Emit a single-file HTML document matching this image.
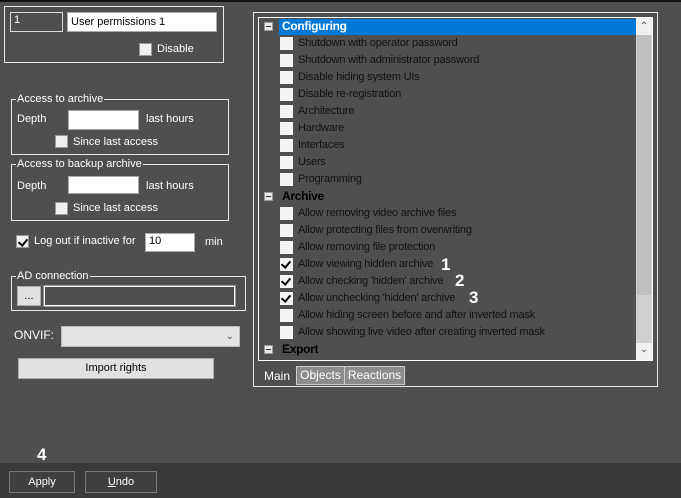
<!DOCTYPE html>
<html><head><style>
*{margin:0;padding:0;box-sizing:border-box}
body{width:681px;height:498px;background:#4f4f4f;font-family:"Liberation Sans",sans-serif;font-size:11px;color:#fff;position:relative;overflow:hidden}
.a{position:absolute}
.box{position:absolute;border:1px solid #e8e8e8}
.inp{position:absolute;background:#fff;border:1px solid #aaa;color:#000;padding-left:3px;line-height:15px}
.cb{position:absolute;width:13px;height:13px;background:#f0f0f0;border:1px solid #999}
.lg{position:absolute;background:#4f4f4f;padding:0 1px;line-height:12px}
.btn{position:absolute;background:#e1e1e1;border:1px solid #adadad;color:#000;text-align:center}
.row{position:absolute;left:0;height:17px;line-height:17px;color:#111;font-size:11px;letter-spacing:-0.2px}
.row .c{position:absolute;left:21px;top:2px;width:13px;height:13px;background:#f4f4f4}
.row .t{position:absolute;left:39px;white-space:nowrap}
.hd .t{left:23px;font-weight:bold;font-size:12px;color:#000;letter-spacing:-0.3px}
.pm{position:absolute;left:5px;top:4px;width:9px;height:9px;border:1px solid #999;background:#e8e8e8}
.pm:after{content:"";position:absolute;left:1px;top:3px;width:5px;height:1px;background:#333}
.num{position:absolute;color:#fff;font-weight:bold;font-size:17px}
.chk:after{content:"";position:absolute;left:3px;top:1px;width:4px;height:7px;border:solid #000;border-width:0 2px 2px 0;transform:rotate(40deg)}
</style></head><body>
<div class="a" style="left:0;top:0;width:681px;height:2px;background:#111"></div>
<div class="box" style="left:4px;top:6px;width:220px;height:57px"></div>
<div class="inp" style="left:10px;top:12px;width:53px;height:20px;background:#4f4f4f;border-color:#ddd;color:#fff">1</div>
<div class="inp" style="left:67px;top:12px;width:150px;height:20px;line-height:18px">User permissions 1</div>
<div class="cb" style="left:139px;top:43px"></div>
<div class="a" style="left:157px;top:43px">Disable</div>

<div class="box" style="left:11px;top:99px;width:218px;height:56px"></div>
<div class="lg" style="left:16px;top:93px">Access to archive</div>
<div class="a" style="left:17px;top:113px">Depth</div>
<div class="inp" style="left:68px;top:110px;width:71px;height:20px"></div>
<div class="a" style="left:146px;top:113px">last hours</div>
<div class="cb" style="left:55px;top:135px"></div>
<div class="a" style="left:73px;top:136px">Since last access</div>

<div class="box" style="left:11px;top:164px;width:218px;height:57px"></div>
<div class="lg" style="left:16px;top:158px">Access to backup archive</div>
<div class="a" style="left:17px;top:180px">Depth</div>
<div class="inp" style="left:68px;top:176px;width:71px;height:18px"></div>
<div class="a" style="left:146px;top:180px">last hours</div>
<div class="cb" style="left:55px;top:202px"></div>
<div class="a" style="left:73px;top:202px">Since last access</div>

<div class="cb chk" style="left:16px;top:235px"></div>
<div class="a" style="left:34px;top:235px">Log out if inactive for</div>
<div class="inp" style="left:145px;top:233px;width:50px;height:19px">10</div>
<div class="a" style="left:205px;top:236px">min</div>

<div class="box" style="left:11px;top:276px;width:235px;height:35px"></div>
<div class="lg" style="left:16px;top:270px">AD connection</div>
<div class="btn" style="left:17px;top:286px;width:24px;height:20px;line-height:18px">...</div>
<div class="a" style="left:44px;top:286px;width:191px;height:20px;border:1px solid #fff;outline:1px solid #999"></div>
<div class="a" style="left:14px;top:328px;font-size:12px">ONVIF:</div>
<div class="a" style="left:61px;top:326px;width:179px;height:21px;background:#e4e4e4;border:1px solid #bbb;color:#555;text-align:right;padding-right:5px;font-size:10px;line-height:19px">&#8964;</div>
<div class="btn" style="left:18px;top:358px;width:196px;height:21px;line-height:19px">Import rights</div>

<div class="box" style="left:253px;top:12px;width:405px;height:375px"></div>
<div class="a" style="left:258px;top:17px;width:395px;height:344px;border:1px solid #fff;overflow:hidden;background:#4f4f4f">
 <div class="a" style="left:377px;top:0;width:16px;height:342px;background:#d0d0d0"></div>
 <div class="a" style="left:377px;top:0;width:16px;height:17px;background:#f0f0f0;color:#555;text-align:center;font-size:10px;line-height:17px">&#8963;</div>
 <div class="a" style="left:377px;top:325px;width:16px;height:17px;background:#f0f0f0;color:#555;text-align:center;font-size:10px;line-height:13px">&#8964;</div>
 <div class="a" style="left:378px;top:17px;width:14px;height:260px;background:#c0c0c0"></div>
 <div class="a" style="left:20px;top:1px;width:357px;height:16px;background:#0078d7"></div>
 <div class="row hd" style="top:0"><div class="pm"></div><span class="t" style="color:#fff">Configuring</span></div>
 <div class="row" style="top:17px"><div class="c"></div><span class="t">Shutdown with operator password</span></div>
 <div class="row" style="top:34px"><div class="c"></div><span class="t">Shutdown with administrator password</span></div>
 <div class="row" style="top:51px"><div class="c"></div><span class="t">Disable hiding system UIs</span></div>
 <div class="row" style="top:68px"><div class="c"></div><span class="t">Disable re-registration</span></div>
 <div class="row" style="top:85px"><div class="c"></div><span class="t">Architecture</span></div>
 <div class="row" style="top:102px"><div class="c"></div><span class="t">Hardware</span></div>
 <div class="row" style="top:119px"><div class="c"></div><span class="t">Interfaces</span></div>
 <div class="row" style="top:136px"><div class="c"></div><span class="t">Users</span></div>
 <div class="row" style="top:153px"><div class="c"></div><span class="t">Programming</span></div>
 <div class="row hd" style="top:170px"><div class="pm"></div><span class="t">Archive</span></div>
 <div class="row" style="top:187px"><div class="c"></div><span class="t">Allow removing video archive files</span></div>
 <div class="row" style="top:204px"><div class="c"></div><span class="t">Allow protecting files from overwriting</span></div>
 <div class="row" style="top:221px"><div class="c"></div><span class="t">Allow removing file protection</span></div>
 <div class="row" style="top:238px"><div class="c chk"></div><span class="t">Allow viewing hidden archive</span></div>
 <div class="row" style="top:255px"><div class="c chk"></div><span class="t">Allow checking 'hidden' archive</span></div>
 <div class="row" style="top:272px"><div class="c chk"></div><span class="t">Allow unchecking 'hidden' archive</span></div>
 <div class="row" style="top:289px"><div class="c"></div><span class="t">Allow hiding screen before and after inverted mask</span></div>
 <div class="row" style="top:306px"><div class="c"></div><span class="t">Allow showing live video after creating inverted mask</span></div>
 <div class="row hd" style="top:323px"><div class="pm"></div><span class="t">Export</span></div>
</div>
<div class="num" style="left:441px;top:255px">1</div>
<div class="num" style="left:455px;top:271px">2</div>
<div class="num" style="left:469px;top:288px">3</div>
<div class="a" style="left:264px;top:369px;font-size:12px">Main</div>
<div class="a" style="left:296px;top:366px;width:49px;height:19px;background:#8c8c8c;border:1px solid #ccc;font-size:12px;text-align:center;line-height:17px">Objects</div>
<div class="a" style="left:344px;top:366px;width:61px;height:19px;background:#8c8c8c;border:1px solid #ccc;font-size:12px;text-align:center;line-height:17px">Reactions</div>

<div class="num" style="left:37px;top:445px">4</div>
<div class="a" style="left:0;top:463px;width:681px;height:35px;background:#3a3a3a"></div>
<div class="a" style="left:9px;top:471px;width:66px;height:22px;background:#3f3f3f;border:1px solid #777;text-align:center;line-height:20px">Apply</div>
<div class="a" style="left:85px;top:471px;width:72px;height:22px;background:#3f3f3f;border:1px solid #777;text-align:center;line-height:20px"><u>U</u>ndo</div>
</body></html>
